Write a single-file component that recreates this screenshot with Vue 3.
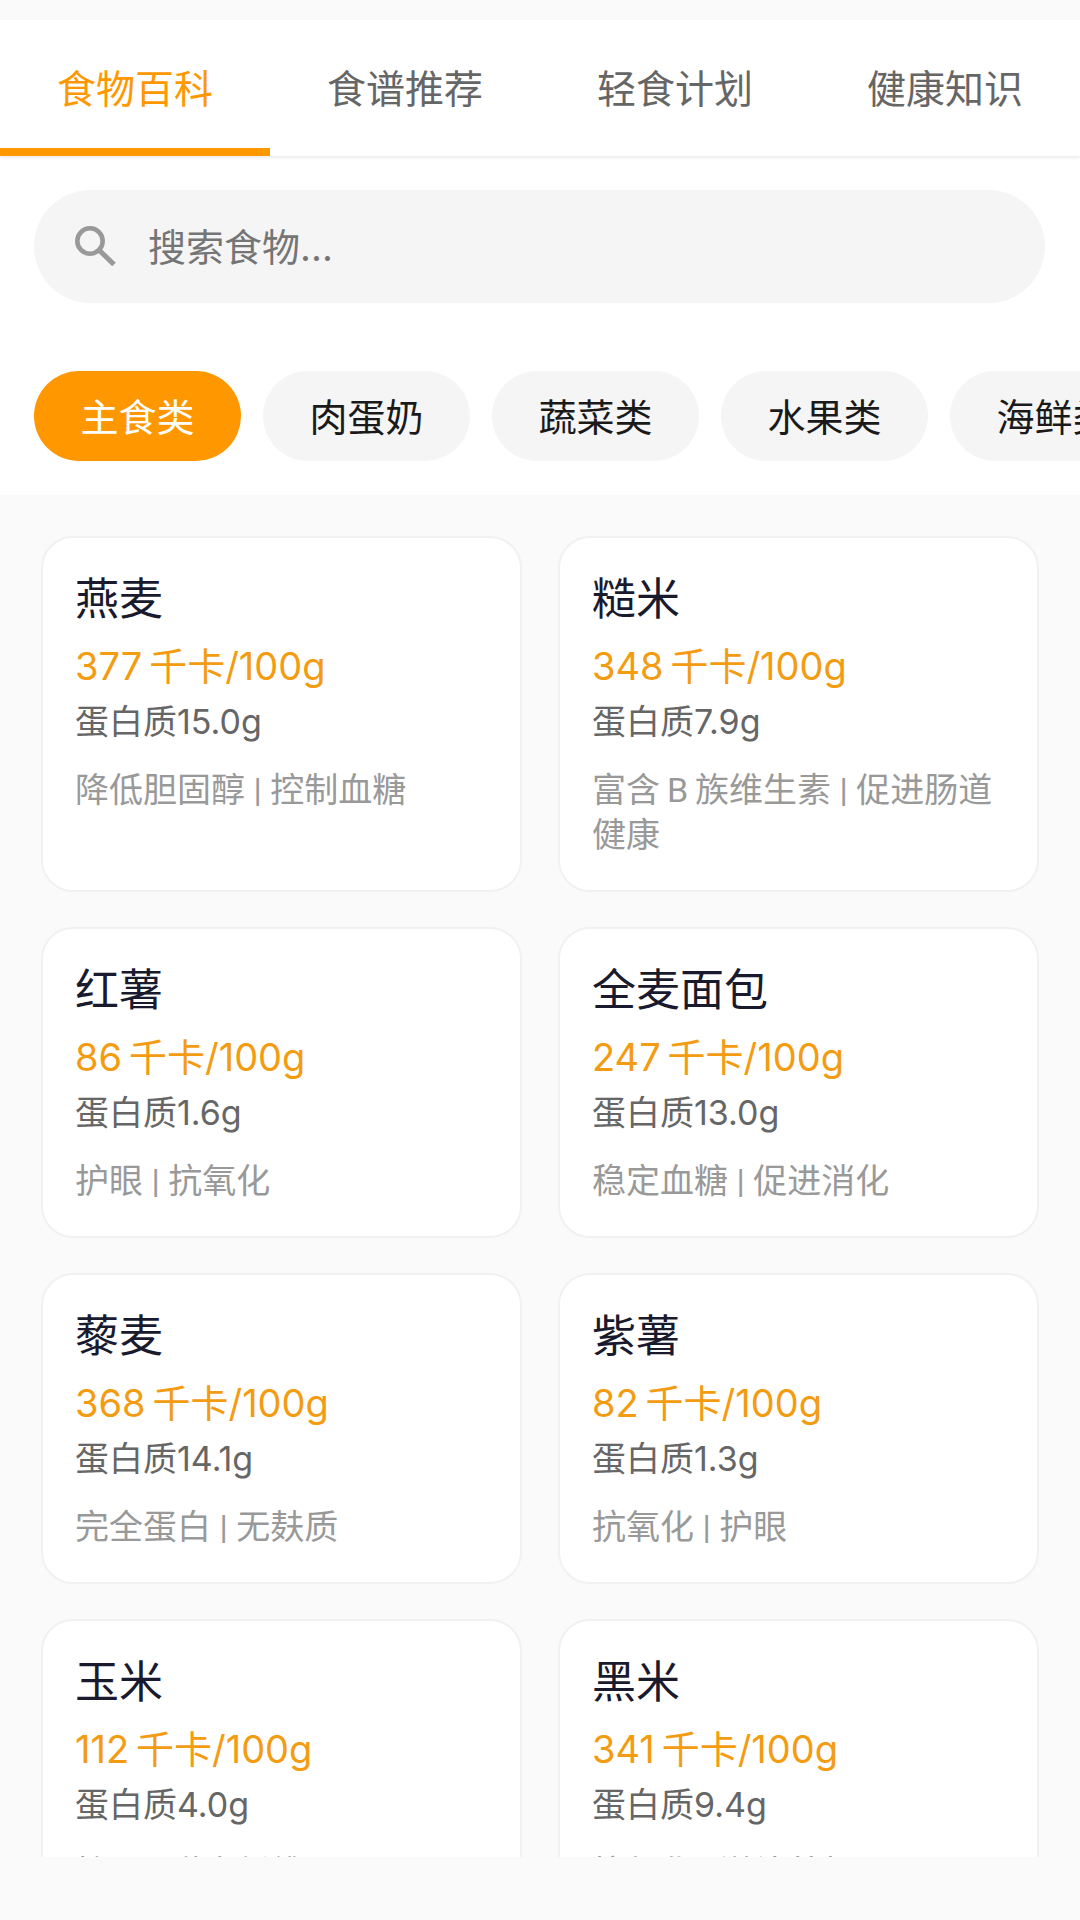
<template>
  <div class="page">
    <div class="tabs">
      <div
        v-for="(tab, i) in tabs"
        :key="tab"
        class="tab"
        :class="{ active: i === 0 }"
      >
        {{ tab }}
      </div>
    </div>

    <div class="top-panel">
      <div class="search">
        <svg class="search-icon" viewBox="0 0 42 40" width="42" height="40">
          <circle cx="16" cy="15" r="12.7" fill="none" stroke="#999" stroke-width="4.6" />
          <path d="M25 24 L40 38.5" fill="none" stroke="#999" stroke-width="5" />
        </svg>
        <span class="placeholder">搜索食物...</span>
      </div>
      <div class="chips">
        <div
          v-for="(chip, i) in chips"
          :key="chip"
          class="chip"
          :class="{ active: i === 0 }"
        >
          {{ chip }}
        </div>
      </div>
    </div>

    <div class="list">
      <div class="grid">
        <div v-for="food in foods" :key="food.name" class="card">
          <div class="name">{{ food.name }}</div>
          <div class="kcal">{{ food.kcal }}&#8201;千卡/100g</div>
          <div class="protein">蛋白质{{ food.protein }}g</div>
          <div class="desc">{{ food.desc }}</div>
        </div>
      </div>
    </div>
  </div>
</template>

<script setup>
const tabs = ["食物百科", "食谱推荐", "轻食计划", "健康知识"];
const chips = ["主食类", "肉蛋奶", "蔬菜类", "水果类", "海鲜类"];

const foods = [
  { name: "燕麦", kcal: 377, protein: "15.0", desc: "降低胆固醇 | 控制血糖" },
  { name: "糙米", kcal: 348, protein: "7.9", desc: "富含\u2009B\u2009族维生素 | 促进肠道健康" },
  { name: "红薯", kcal: 86, protein: "1.6", desc: "护眼 | 抗氧化" },
  { name: "全麦面包", kcal: 247, protein: "13.0", desc: "稳定血糖 | 促进消化" },
  { name: "藜麦", kcal: 368, protein: "14.1", desc: "完全蛋白 | 无麸质" },
  { name: "紫薯", kcal: 82, protein: "1.3", desc: "抗氧化 | 护眼" },
  { name: "玉米", kcal: 112, protein: "4.0", desc: "护眼 | 膳食纤维" },
  { name: "黑米", kcal: 341, protein: "9.4", desc: "抗氧化 | 滋补养颜" },
];
</script>

<style scoped>
.page {
  width: 1080px;
  height: 1920px;
  overflow: hidden;
  display: flex;
  flex-direction: column;
  padding-top: 20px;
  box-sizing: border-box;
  background: #fafafa;
  font-family: Inter, "Noto Sans CJK SC", sans-serif;
}

.tabs {
  display: flex;
  height: 136px;
  background: #fff;
  box-shadow: 0 2px 3px rgba(0, 0, 0, 0.08);
  position: relative;
}
.tab {
  flex: 1;
  box-sizing: border-box;
  display: flex;
  align-items: center;
  justify-content: center;
  font-size: 39px;
  color: #666;
  padding-bottom: 5px;
}
.tab.active {
  color: #ff9800;
  border-bottom: 8px solid #ff9800;
  padding-top: 3px;
  padding-bottom: 0;
}

.top-panel {
  background: #fff;
  padding: 34px 34px 34px;
}
.search {
  height: 113px;
  width: 1011px;
  border-radius: 57px;
  background: #f5f5f5;
  display: flex;
  align-items: center;
  padding-left: 40px;
  box-sizing: border-box;
}
.search-icon {
  flex: none;
  margin-right: 32px;
  margin-bottom: 2px;
}
.placeholder {
  font-size: 38px;
  color: #757575;
  padding-bottom: 4px;
}

.chips {
  display: flex;
  gap: 22px;
  margin-top: 68px;
  margin-right: -34px;
  overflow: hidden;
}
.chip {
  flex: none;
  width: 207px;
  height: 90px;
  border-radius: 45px;
  background: #f5f5f5;
  color: #1a1a1a;
  font-size: 38px;
  padding-bottom: 3px;
  box-sizing: border-box;
  display: flex;
  align-items: center;
  justify-content: center;
}
.chip.active {
  background: #ff9800;
  color: #fff;
}

.list {
  flex: 1;
  margin-bottom: 63px;
  overflow: hidden;
  padding: 41px 41px 0 41px;
}
.grid {
  display: grid;
  grid-template-columns: 481px 481px;
  column-gap: 36px;
  row-gap: 35px;
}
.card {
  background: #fff;
  border: 2px solid #f1f1f1;
  border-radius: 32px;
  box-sizing: border-box;
  padding: 31px 32px 32px;
}
.name {
  font-size: 44px;
  line-height: 60px;
  color: #1a1a2e;
}
.kcal {
  font-size: 38px;
  line-height: 50px;
  margin-top: 12px;
  color: #f39c12;
}
.protein {
  font-size: 34px;
  line-height: 46px;
  margin-top: 8px;
  color: #666;
}
.desc {
  font-family: Roboto, "Noto Sans CJK SC", sans-serif;
  font-size: 34px;
  line-height: 45px;
  margin-top: 23px;
  color: #999;
}
</style>
